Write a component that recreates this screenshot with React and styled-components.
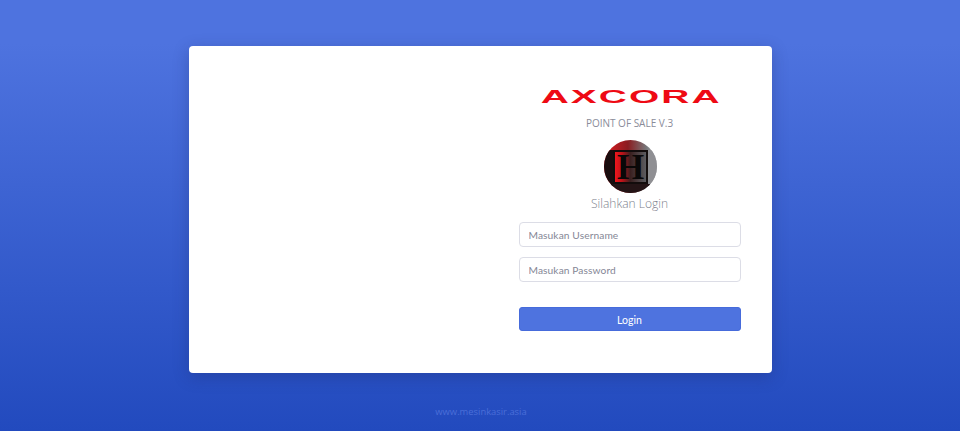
import React from 'react'
import styled, { createGlobalStyle } from 'styled-components'

const GlobalStyle = createGlobalStyle`
    html, body {
        margin: 0;
        padding: 0;
        height: 100%;
    }
    #root {
        height: 100%;
    }
    * {
        box-sizing: border-box;
    }
`
const Page = styled.main`
    height: 431px;
    overflow: hidden;
    background: linear-gradient(180deg, #4e73df 10%, #224abe 100%);
    display: flex;
    flex-direction: column;
    align-items: center;
    padding-top: 46px;
    font-family: Lato, "Noto Sans", sans-serif;
`
const Card = styled.section`
    width: 583px;
    height: 327px;
    background: #fff;
    border-radius: 4px;
    box-shadow: 0 4px 16px rgba(30, 40, 100, .3);
    display: grid;
    grid-template-columns: 1fr 222px;
    padding: 0 31px 0 0;
`
const Form = styled.form`
    grid-column: 2;
    display: flex;
    flex-direction: column;
    align-items: center;
    padding-top: 40px;
`
const Logo = styled.div`
    height: 21px;
    padding-left: 2px;
    color: #ee0a14;
    font-family: "Liberation Sans", sans-serif;
    font-size: 18.5px;
    line-height: 21px;
    font-weight: 700;
    letter-spacing: 1px;
    white-space: nowrap;
    transform: scaleX(2.1);
`
const Subtitle = styled.div`
    margin-top: 9px;
    font-family: "Open Sans", sans-serif;
    font-size: 10px;
    line-height: 14px;
    color: #8a8c99;
`
const Avatar = styled.svg`
    display: block;
    width: 53px;
    height: 53px;
    margin-top: 10px;
    transform: translateX(1px);
`
const Title = styled.h1`
    margin: 1px 0 0;
    font-family: "Open Sans", sans-serif;
    font-size: 12px;
    line-height: 20px;
    font-weight: 300;
    color: #7d7f8d;
`
const Input = styled.input`
    display: block;
    width: 100%;
    height: 25px;
    margin-top: ${props => props.$gap}px;
    padding: 0 9px;
    border: 1px solid #dcdde6;
    border-radius: 4px;
    background: #fff;
    font-family: inherit;
    font-size: 10.2px;
    letter-spacing: .1px;
    color: #6e707e;
    outline: none;
    &::placeholder {
        color: #858796;
        opacity: 1;
    }
`
const Button = styled.button`
    display: block;
    width: 100%;
    height: 24px;
    margin-top: 25px;
    padding: 1px 0 0;
    border: 1px solid #466bdb;
    border-radius: 3px;
    background: #4e73df;
    color: #fff;
    font-family: inherit;
    font-size: 10.5px;
`
const Footer = styled.footer`
    margin-top: 32px;
    padding-left: 2px;
    font-family: "Open Sans", sans-serif;
    font-size: 9.4px;
    line-height: 14px;
    color: #4a6ed8;
`

const AvatarImage = () => (
    <Avatar viewBox="0 0 53 53" role="img" aria-label="H">
        <defs>
            <linearGradient id="ring" x1="0" x2="1" y1="0" y2="0">
                <stop offset="0" stopColor="#e01c22" />
                <stop offset=".45" stopColor="#8a1c20" />
                <stop offset=".8" stopColor="#77777a" />
                <stop offset="1" stopColor="#b4b4b8" />
            </linearGradient>
            <linearGradient id="plate" x1="0" x2="1" y1="0" y2="0">
                <stop offset="0" stopColor="#f0161e" />
                <stop offset=".22" stopColor="#c01218" />
                <stop offset=".5" stopColor="#3a2020" />
                <stop offset="1" stopColor="#5c5c60" />
            </linearGradient>
            <clipPath id="disc"><circle cx="26.5" cy="26.5" r="26.5" /></clipPath>
        </defs>
        <g clipPath="url(#disc)">
            <rect width="53" height="53" fill="url(#ring)" />
            <rect x="0" y="10" width="9" height="43" fill="#1a0c0e" />
            <rect x="0" y="44" width="53" height="9" fill="#241416" />
            <rect x="44" y="10" width="9" height="34" fill="#8f8f93" />
            <rect x="9" y="10" width="35" height="34" fill="#120c0c" />
            <rect x="11" y="12" width="31" height="30" fill="url(#plate)" />
            <text x="26.5" y="39" textAnchor="middle" fontFamily="'Liberation Serif', serif" fontWeight="700" fontSize="35" fill="#0a0808">H</text>
        </g>
    </Avatar>
)

const App = () => {
    return (
        <Page>
            <GlobalStyle />
            <Card>
                <Form onSubmit={e => e.preventDefault()}>
                    <Logo>AXCORA</Logo>
                    <Subtitle>POINT OF SALE V.3</Subtitle>
                    <AvatarImage />
                    <Title>Silahkan Login</Title>
                    <Input $gap={8} placeholder="Masukan Username" />
                    <Input $gap={10} placeholder="Masukan Password" />
                    <Button type="submit">Login</Button>
                </Form>
            </Card>
            <Footer>www.mesinkasir.asia</Footer>
        </Page>
    )
}

export default App
